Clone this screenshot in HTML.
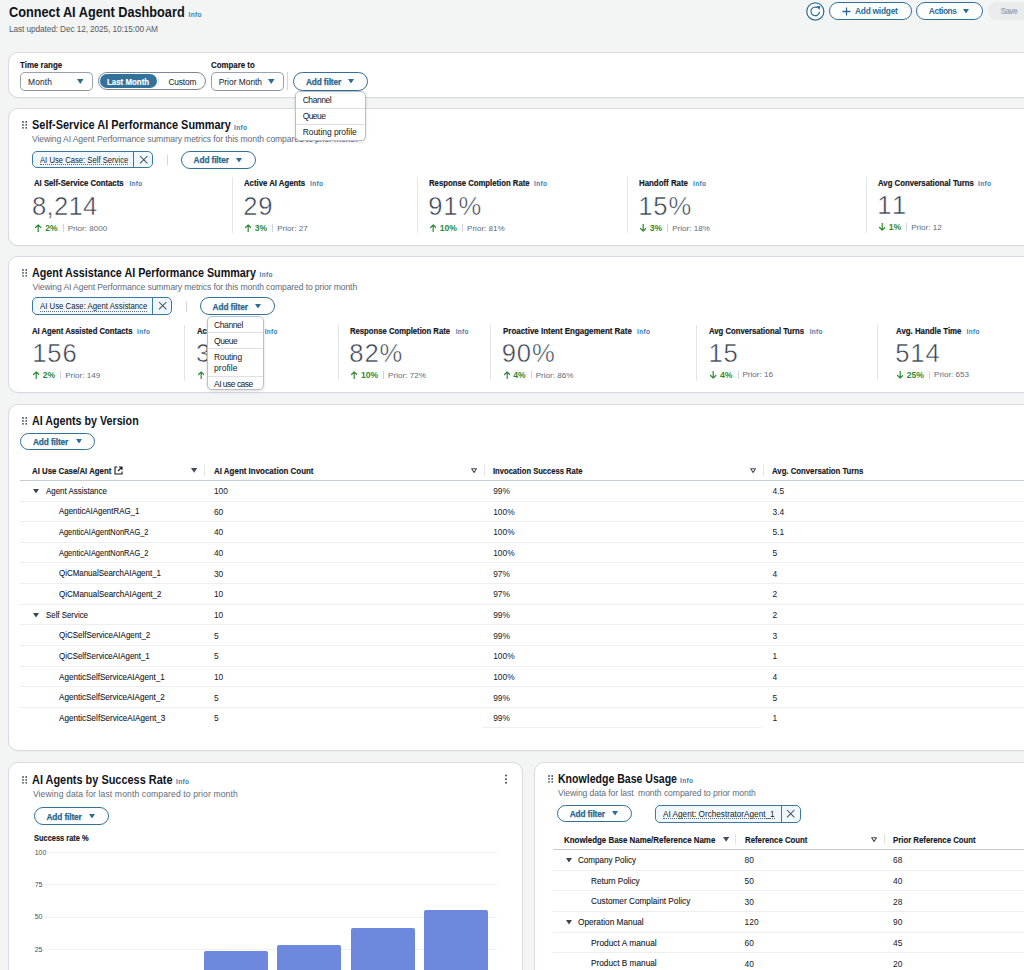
<!DOCTYPE html>
<html><head><meta charset="utf-8">
<style>
*{box-sizing:border-box;margin:0;padding:0}
html,body{width:1024px;height:970px;overflow:hidden}
body{background:#f3f4f4;font-family:"Liberation Sans",sans-serif;color:#16191f;position:relative}
.a{position:absolute;white-space:nowrap;line-height:normal}
.panel{position:absolute;background:#fff;border:1px solid #d7dadf;border-radius:10px;box-shadow:0 0.5px 0.5px rgba(0,7,22,.05)}
</style></head><body>

<div class="a " style="left:8.80px;top:3.95px;font-size:14.2px;transform:scaleX(0.8962);transform-origin:0 0;font-weight:bold;color:#0f141a">Connect AI Agent Dashboard</div>
<div class="a " style="left:188.50px;top:10.92px;font-size:6.5px;letter-spacing:0.330px;font-weight:bold;color:#3a7eb0">Info</div>
<div class="a " style="left:9.00px;top:24.09px;font-size:8.3px;letter-spacing:-0.110px;color:#545b64">Last updated: Dec 12, 2025, 10:15:00 AM</div>
<svg class="a" style="left:805.6px;top:1.8px" width="19" height="19" viewBox="0 0 19 19"><circle cx="9.3" cy="9.45" r="8.55" fill="#fff" stroke="#31709a" stroke-width="1.25"/><path d="M13.5 9.9 A4.3 4.3 0 1 1 11.6 5.8" fill="none" stroke="#2d6c95" stroke-width="1.2"/><path d="M10.4 4.3 L14.3 4.1 L13.6 8.0 Z" fill="#2d6c95"/></svg>
<div class="a" style="left:829.00px;top:2.20px;width:82.50px;height:18.20px;border:1.5px solid #31709a;border-radius:10px;background:#fff"></div>
<svg class="a" style="left:841.8px;top:6.9px" width="9" height="9" viewBox="0 0 9 9"><path d="M4.5 0.5 V8.5 M0.5 4.5 H8.5" stroke="#2d6c95" stroke-width="1.3"/></svg>
<div class="a " style="left:855.00px;top:6.40px;font-size:8.4px;letter-spacing:-0.251px;font-weight:bold;color:#2d6c95">Add widget</div>
<div class="a" style="left:916.00px;top:2.20px;width:66.50px;height:18.20px;border:1.5px solid #31709a;border-radius:10px;background:#fff"></div>
<div class="a " style="left:928.80px;top:6.40px;font-size:8.4px;letter-spacing:-0.433px;font-weight:bold;color:#2d6c95">Actions</div>
<svg class="a" style="left:963.00px;top:8.95px" width="6" height="4.5" viewBox="0 0 6 4.5"><path d="M0 0 L6 0 L3.0 4.5 Z" fill="#2d6c95"/></svg>
<div class="a" style="left:988.00px;top:2.40px;width:52.00px;height:17.80px;border-radius:10px;background:#e9ebed"></div>
<div class="a " style="left:1000.60px;top:6.40px;font-size:8.4px;letter-spacing:-0.872px;font-weight:bold;color:#9ba7b6">Save</div>
<div class="panel" style="left:7.90px;top:52.00px;width:1032.10px;height:45.50px"></div>
<div class="a " style="left:20.30px;top:59.91px;font-size:8.5px;transform:scaleX(0.9338);transform-origin:0 0;font-weight:bold;color:#16191f;-webkit-text-stroke:0.15px #16191f">Time range</div>
<div class="a" style="left:20.20px;top:72.20px;width:72.60px;height:18.40px;border:1px solid #97a3b0;border-bottom-color:#8a96a4;border-radius:5px;background:#fff"></div>
<div class="a " style="left:28.10px;top:77.00px;font-size:8.4px;letter-spacing:0.139px;color:#16191f">Month</div>
<svg class="a" style="left:77.25px;top:79.10px" width="6.5" height="5" viewBox="0 0 6.5 5"><path d="M0 0 L6.5 0 L3.25 5 Z" fill="#2d6c95"/></svg>
<div class="a" style="left:98.00px;top:72.20px;width:108.20px;height:18.10px;border:1px solid #7d8998;border-radius:10px;background:#fff"></div>
<div class="a" style="left:100.00px;top:74.40px;width:56.50px;height:13.80px;border-radius:8px;background:#33729b"></div>
<div class="a " style="left:106.60px;top:76.80px;font-size:8.4px;transform:scaleX(0.9422);transform-origin:0 0;font-weight:bold;color:#fff;-webkit-text-stroke:0.15px #fff">Last Month</div>
<div class="a" style="left:158.10px;top:77.00px;width:1.00px;height:9.00px;background:#e3e6e9"></div>
<div class="a " style="left:168.40px;top:76.80px;font-size:8.4px;letter-spacing:-0.168px;color:#16191f">Custom</div>
<div class="a " style="left:211.00px;top:59.91px;font-size:8.5px;transform:scaleX(0.9253);transform-origin:0 0;font-weight:bold;color:#16191f;-webkit-text-stroke:0.15px #16191f">Compare to</div>
<div class="a" style="left:211.00px;top:72.20px;width:73.20px;height:18.40px;border:1px solid #97a3b0;border-bottom-color:#8a96a4;border-radius:5px;background:#fff"></div>
<div class="a " style="left:218.75px;top:77.00px;font-size:8.4px;letter-spacing:-0.001px;color:#16191f">Prior Month</div>
<svg class="a" style="left:268.35px;top:79.10px" width="6.5" height="5" viewBox="0 0 6.5 5"><path d="M0 0 L6.5 0 L3.25 5 Z" fill="#2d6c95"/></svg>
<div class="a" style="left:287.30px;top:72.30px;width:1.00px;height:18.10px;background:#d3d7dc"></div>
<div class="a" style="left:293.20px;top:72.30px;width:74.70px;height:18.30px;border:1.5px solid #31709a;border-radius:10px;background:#fff"></div>
<div class="a " style="left:305.90px;top:76.94px;font-size:8.3px;letter-spacing:-0.125px;font-weight:bold;color:#2a6890;-webkit-text-stroke:0.25px #2a6890">Add filter</div>
<svg class="a" style="left:348.10px;top:79.20px" width="6" height="4.5" viewBox="0 0 6 4.5"><path d="M0 0 L6 0 L3.0 4.5 Z" fill="#2d6c95"/></svg>
<div class="panel" style="left:7.90px;top:108.00px;width:1032.10px;height:138.00px"></div>
<svg class="a" style="left:21.90px;top:121.00px" width="6" height="8" viewBox="0 0 6 8"><circle cx="1.00" cy="1.00" r="0.9" fill="#414d5c"/><circle cx="1.00" cy="3.90" r="0.9" fill="#414d5c"/><circle cx="1.00" cy="6.80" r="0.9" fill="#414d5c"/><circle cx="4.20" cy="1.00" r="0.9" fill="#414d5c"/><circle cx="4.20" cy="3.90" r="0.9" fill="#414d5c"/><circle cx="4.20" cy="6.80" r="0.9" fill="#414d5c"/></svg>
<div class="a " style="left:32.00px;top:118.37px;font-size:12.3px;transform:scaleX(0.8893);transform-origin:0 0;font-weight:bold;color:#0f141a">Self-Service AI Performance Summary</div>
<div class="a " style="left:234.00px;top:123.52px;font-size:6.5px;letter-spacing:0.330px;font-weight:bold;color:#3a7eb0">Info</div>
<div class="a " style="left:32.00px;top:134.12px;font-size:8.6px;letter-spacing:-0.106px;color:#5f6b7a">Viewing AI Agent Performance summary metrics for this month compared to prior month</div>
<div class="a" style="left:32.00px;top:150.50px;width:121.00px;height:17.90px;border:1.5px solid #3a78a2;border-radius:5px;background:#f1f8fd"></div>
<div class="a" style="left:133.10px;top:150.50px;width:1.00px;height:17.90px;background:#3a78a2"></div>
<div class="a " style="left:39.80px;top:154.67px;font-size:8.6px;transform:scaleX(0.8925);transform-origin:0 0;color:#16191f;">AI Use Case: Self Service</div>
<div class="a" style="left:39.80px;top:163.85px;width:88.30px;height:1.00px;border-bottom:1px dotted #5f6b7a"></div>
<svg class="a" style="left:138.60px;top:154.75px" width="9.4" height="9.4" viewBox="0 0 9.4 9.4"><path d="M1 1 L8.4 8.4 M8.4 1 L1 8.4" stroke="#414d5c" stroke-width="1.05"/></svg>
<div class="a" style="left:166.80px;top:155.00px;width:1.00px;height:10.00px;background:#d3d7dc"></div>
<div class="a" style="left:181.30px;top:151.00px;width:74.70px;height:17.60px;border:1.5px solid #31709a;border-radius:10px;background:#fff"></div>
<div class="a " style="left:193.60px;top:155.29px;font-size:8.3px;letter-spacing:-0.125px;font-weight:bold;color:#2a6890;-webkit-text-stroke:0.25px #2a6890">Add filter</div>
<svg class="a" style="left:236.20px;top:157.55px" width="6" height="4.5" viewBox="0 0 6 4.5"><path d="M0 0 L6 0 L3.0 4.5 Z" fill="#2d6c95"/></svg>
<div class="a" style="left:231.50px;top:177.00px;width:1.00px;height:56.00px;background:#e3e6e9"></div>
<div class="a" style="left:417.00px;top:177.00px;width:1.00px;height:56.00px;background:#e3e6e9"></div>
<div class="a" style="left:626.50px;top:177.00px;width:1.00px;height:56.00px;background:#e3e6e9"></div>
<div class="a" style="left:865.50px;top:177.00px;width:1.00px;height:56.00px;background:#e3e6e9"></div>
<div class="a " style="left:34.40px;top:178.22px;font-size:8.6px;transform:scaleX(0.9013);transform-origin:0 0;font-weight:bold;color:#16191f;-webkit-text-stroke:0.2px #16191f">AI Self-Service Contacts</div>
<div class="a " style="left:129.40px;top:180.12px;font-size:6.5px;letter-spacing:0.330px;font-weight:bold;color:#3a7eb0">Info</div>
<div class="a " style="left:32.00px;top:192.13px;font-size:25.6px;color:#354150;-webkit-text-stroke:0.5px #fff;letter-spacing:0.3px">8,214</div>
<svg class="a" style="left:35.40px;top:224.40px" width="6.4" height="8" viewBox="0 0 6.4 8"><path d="M3.2 0.9 L3.2 8 M0.6 3.5 L3.2 0.9 L5.8 3.5" stroke="#2e8b35" stroke-width="1.2" fill="none" stroke-linecap="round" stroke-linejoin="round"/></svg>
<div class="a " style="left:45.20px;top:223.22px;font-size:8.6px;font-weight:bold;color:#2e8b35">2%</div>
<div class="a" style="left:62.83px;top:224.40px;width:1.00px;height:7.80px;background:#d1d5db"></div>
<div class="a " style="left:67.63px;top:223.67px;font-size:8.1px;color:#5f6b7a">Prior: 8000</div>
<div class="a " style="left:244.00px;top:178.22px;font-size:8.6px;transform:scaleX(0.9040);transform-origin:0 0;font-weight:bold;color:#16191f;-webkit-text-stroke:0.2px #16191f">Active AI Agents</div>
<div class="a " style="left:310.00px;top:180.12px;font-size:6.5px;letter-spacing:0.330px;font-weight:bold;color:#3a7eb0">Info</div>
<div class="a " style="left:243.20px;top:192.13px;font-size:25.6px;color:#354150;-webkit-text-stroke:0.5px #fff;letter-spacing:0.9px">29</div>
<svg class="a" style="left:245.00px;top:224.40px" width="6.4" height="8" viewBox="0 0 6.4 8"><path d="M3.2 0.9 L3.2 8 M0.6 3.5 L3.2 0.9 L5.8 3.5" stroke="#2e8b35" stroke-width="1.2" fill="none" stroke-linecap="round" stroke-linejoin="round"/></svg>
<div class="a " style="left:254.80px;top:223.22px;font-size:8.6px;font-weight:bold;color:#2e8b35">3%</div>
<div class="a" style="left:272.43px;top:224.40px;width:1.00px;height:7.80px;background:#d1d5db"></div>
<div class="a " style="left:277.23px;top:223.67px;font-size:8.1px;color:#5f6b7a">Prior: 27</div>
<div class="a " style="left:429.00px;top:178.22px;font-size:8.6px;transform:scaleX(0.9006);transform-origin:0 0;font-weight:bold;color:#16191f;-webkit-text-stroke:0.2px #16191f">Response Completion Rate</div>
<div class="a " style="left:534.00px;top:180.12px;font-size:6.5px;letter-spacing:0.330px;font-weight:bold;color:#3a7eb0">Info</div>
<div class="a " style="left:428.20px;top:192.13px;font-size:25.6px;color:#354150;-webkit-text-stroke:0.5px #fff;letter-spacing:0.9px">91%</div>
<svg class="a" style="left:430.00px;top:224.40px" width="6.4" height="8" viewBox="0 0 6.4 8"><path d="M3.2 0.9 L3.2 8 M0.6 3.5 L3.2 0.9 L5.8 3.5" stroke="#2e8b35" stroke-width="1.2" fill="none" stroke-linecap="round" stroke-linejoin="round"/></svg>
<div class="a " style="left:439.80px;top:223.22px;font-size:8.6px;font-weight:bold;color:#2e8b35">10%</div>
<div class="a" style="left:462.21px;top:224.40px;width:1.00px;height:7.80px;background:#d1d5db"></div>
<div class="a " style="left:467.01px;top:223.67px;font-size:8.1px;color:#5f6b7a">Prior: 81%</div>
<div class="a " style="left:639.00px;top:178.22px;font-size:8.6px;transform:scaleX(0.9158);transform-origin:0 0;font-weight:bold;color:#16191f;-webkit-text-stroke:0.2px #16191f">Handoff Rate</div>
<div class="a " style="left:693.00px;top:180.12px;font-size:6.5px;letter-spacing:0.330px;font-weight:bold;color:#3a7eb0">Info</div>
<div class="a " style="left:638.20px;top:192.13px;font-size:25.6px;color:#354150;-webkit-text-stroke:0.5px #fff;letter-spacing:0.9px">15%</div>
<svg class="a" style="left:640.00px;top:224.40px" width="6.4" height="8" viewBox="0 0 6.4 8"><path d="M3.2 0 L3.2 7.1 M0.6 4.5 L3.2 7.1 L5.8 4.5" stroke="#2e8b35" stroke-width="1.2" fill="none" stroke-linecap="round" stroke-linejoin="round"/></svg>
<div class="a " style="left:649.80px;top:223.22px;font-size:8.6px;font-weight:bold;color:#2e8b35">3%</div>
<div class="a" style="left:667.43px;top:224.40px;width:1.00px;height:7.80px;background:#d1d5db"></div>
<div class="a " style="left:672.23px;top:223.67px;font-size:8.1px;color:#5f6b7a">Prior: 18%</div>
<div class="a " style="left:878.00px;top:177.72px;font-size:8.6px;transform:scaleX(0.9050);transform-origin:0 0;font-weight:bold;color:#16191f;-webkit-text-stroke:0.2px #16191f">Avg Conversational Turns</div>
<div class="a " style="left:978.00px;top:179.62px;font-size:6.5px;letter-spacing:0.330px;font-weight:bold;color:#3a7eb0">Info</div>
<div class="a " style="left:877.20px;top:191.13px;font-size:25.6px;color:#354150;-webkit-text-stroke:0.5px #fff;letter-spacing:2.5px">11</div>
<svg class="a" style="left:879.00px;top:223.40px" width="6.4" height="8" viewBox="0 0 6.4 8"><path d="M3.2 0 L3.2 7.1 M0.6 4.5 L3.2 7.1 L5.8 4.5" stroke="#2e8b35" stroke-width="1.2" fill="none" stroke-linecap="round" stroke-linejoin="round"/></svg>
<div class="a " style="left:888.80px;top:222.22px;font-size:8.6px;font-weight:bold;color:#2e8b35">1%</div>
<div class="a" style="left:906.43px;top:223.40px;width:1.00px;height:7.80px;background:#d1d5db"></div>
<div class="a " style="left:911.23px;top:222.67px;font-size:8.1px;color:#5f6b7a">Prior: 12</div>
<div class="panel" style="left:7.90px;top:256.40px;width:1032.10px;height:136.40px"></div>
<svg class="a" style="left:21.90px;top:269.00px" width="6" height="8" viewBox="0 0 6 8"><circle cx="1.00" cy="1.00" r="0.9" fill="#414d5c"/><circle cx="1.00" cy="3.90" r="0.9" fill="#414d5c"/><circle cx="1.00" cy="6.80" r="0.9" fill="#414d5c"/><circle cx="4.20" cy="1.00" r="0.9" fill="#414d5c"/><circle cx="4.20" cy="3.90" r="0.9" fill="#414d5c"/><circle cx="4.20" cy="6.80" r="0.9" fill="#414d5c"/></svg>
<div class="a " style="left:32.20px;top:266.17px;font-size:12.3px;transform:scaleX(0.8746);transform-origin:0 0;font-weight:bold;color:#0f141a">Agent Assistance AI Performance Summary</div>
<div class="a " style="left:259.60px;top:271.02px;font-size:6.5px;letter-spacing:0.330px;font-weight:bold;color:#3a7eb0">Info</div>
<div class="a " style="left:32.50px;top:281.92px;font-size:8.6px;letter-spacing:-0.116px;color:#5f6b7a">Viewing AI Agent Performance summary metrics for this month compared to prior month</div>
<div class="a" style="left:31.70px;top:297.20px;width:140.20px;height:17.80px;border:1.5px solid #3a78a2;border-radius:5px;background:#f1f8fd"></div>
<div class="a" style="left:152.00px;top:297.20px;width:1.00px;height:17.80px;background:#3a78a2"></div>
<div class="a " style="left:39.50px;top:301.32px;font-size:8.6px;transform:scaleX(0.9060);transform-origin:0 0;color:#16191f;">AI Use Case: Agent Assistance</div>
<div class="a" style="left:39.50px;top:310.50px;width:107.40px;height:1.00px;border-bottom:1px dotted #5f6b7a"></div>
<svg class="a" style="left:157.50px;top:301.40px" width="9.4" height="9.4" viewBox="0 0 9.4 9.4"><path d="M1 1 L8.4 8.4 M8.4 1 L1 8.4" stroke="#414d5c" stroke-width="1.05"/></svg>
<div class="a" style="left:185.90px;top:300.50px;width:1.00px;height:11.20px;background:#d3d7dc"></div>
<div class="a" style="left:200.20px;top:297.30px;width:74.40px;height:17.50px;border:1.5px solid #31709a;border-radius:10px;background:#fff"></div>
<div class="a " style="left:212.60px;top:301.54px;font-size:8.3px;letter-spacing:-0.125px;font-weight:bold;color:#2a6890;-webkit-text-stroke:0.25px #2a6890">Add filter</div>
<svg class="a" style="left:255.00px;top:303.80px" width="6" height="4.5" viewBox="0 0 6 4.5"><path d="M0 0 L6 0 L3.0 4.5 Z" fill="#2d6c95"/></svg>
<div class="a" style="left:184.00px;top:324.60px;width:1.00px;height:56.20px;background:#e3e6e9"></div>
<div class="a" style="left:337.50px;top:324.60px;width:1.00px;height:56.20px;background:#e3e6e9"></div>
<div class="a" style="left:490.10px;top:324.60px;width:1.00px;height:56.20px;background:#e3e6e9"></div>
<div class="a" style="left:696.30px;top:324.60px;width:1.00px;height:56.20px;background:#e3e6e9"></div>
<div class="a" style="left:877.00px;top:324.60px;width:1.00px;height:56.20px;background:#e3e6e9"></div>
<div class="a " style="left:32.00px;top:325.82px;font-size:8.6px;transform:scaleX(0.8963);transform-origin:0 0;font-weight:bold;color:#16191f;-webkit-text-stroke:0.2px #16191f">AI Agent Assisted Contacts</div>
<div class="a " style="left:137.00px;top:327.72px;font-size:6.5px;letter-spacing:0.330px;font-weight:bold;color:#3a7eb0">Info</div>
<div class="a " style="left:32.20px;top:339.13px;font-size:25.6px;color:#354150;-webkit-text-stroke:0.5px #fff;letter-spacing:0.9px">156</div>
<svg class="a" style="left:33.00px;top:371.40px" width="6.4" height="8" viewBox="0 0 6.4 8"><path d="M3.2 0.9 L3.2 8 M0.6 3.5 L3.2 0.9 L5.8 3.5" stroke="#2e8b35" stroke-width="1.2" fill="none" stroke-linecap="round" stroke-linejoin="round"/></svg>
<div class="a " style="left:42.80px;top:370.22px;font-size:8.6px;font-weight:bold;color:#2e8b35">2%</div>
<div class="a" style="left:60.43px;top:371.40px;width:1.00px;height:7.80px;background:#d1d5db"></div>
<div class="a " style="left:65.23px;top:370.67px;font-size:8.1px;color:#5f6b7a">Prior: 149</div>
<div class="a " style="left:196.70px;top:325.82px;font-size:8.6px;transform:scaleX(0.9040);transform-origin:0 0;font-weight:bold;color:#16191f;-webkit-text-stroke:0.2px #16191f">Active AI Agents</div>
<div class="a " style="left:264.70px;top:327.72px;font-size:6.5px;letter-spacing:0.330px;font-weight:bold;color:#3a7eb0">Info</div>
<div class="a " style="left:195.90px;top:339.13px;font-size:25.6px;color:#354150;-webkit-text-stroke:0.5px #fff;letter-spacing:0.9px">34</div>
<svg class="a" style="left:197.70px;top:371.40px" width="6.4" height="8" viewBox="0 0 6.4 8"><path d="M3.2 0.9 L3.2 8 M0.6 3.5 L3.2 0.9 L5.8 3.5" stroke="#2e8b35" stroke-width="1.2" fill="none" stroke-linecap="round" stroke-linejoin="round"/></svg>
<div class="a " style="left:207.50px;top:370.22px;font-size:8.6px;font-weight:bold;color:#2e8b35">3%</div>
<div class="a" style="left:225.13px;top:371.40px;width:1.00px;height:7.80px;background:#d1d5db"></div>
<div class="a " style="left:229.93px;top:370.67px;font-size:8.1px;color:#5f6b7a">Prior: 30</div>
<div class="a " style="left:350.10px;top:325.82px;font-size:8.6px;transform:scaleX(0.8953);transform-origin:0 0;font-weight:bold;color:#16191f;-webkit-text-stroke:0.2px #16191f">Response Completion Rate</div>
<div class="a " style="left:455.70px;top:327.72px;font-size:6.5px;letter-spacing:0.330px;font-weight:bold;color:#3a7eb0">Info</div>
<div class="a " style="left:349.30px;top:339.13px;font-size:25.6px;color:#354150;-webkit-text-stroke:0.5px #fff;letter-spacing:0.9px">82%</div>
<svg class="a" style="left:351.10px;top:371.40px" width="6.4" height="8" viewBox="0 0 6.4 8"><path d="M3.2 0.9 L3.2 8 M0.6 3.5 L3.2 0.9 L5.8 3.5" stroke="#2e8b35" stroke-width="1.2" fill="none" stroke-linecap="round" stroke-linejoin="round"/></svg>
<div class="a " style="left:360.90px;top:370.22px;font-size:8.6px;font-weight:bold;color:#2e8b35">10%</div>
<div class="a" style="left:383.31px;top:371.40px;width:1.00px;height:7.80px;background:#d1d5db"></div>
<div class="a " style="left:388.11px;top:370.67px;font-size:8.1px;color:#5f6b7a">Prior: 72%</div>
<div class="a " style="left:502.50px;top:325.82px;font-size:8.6px;transform:scaleX(0.9238);transform-origin:0 0;font-weight:bold;color:#16191f;-webkit-text-stroke:0.2px #16191f">Proactive Intent Engagement Rate</div>
<div class="a " style="left:637.00px;top:327.72px;font-size:6.5px;letter-spacing:0.330px;font-weight:bold;color:#3a7eb0">Info</div>
<div class="a " style="left:501.70px;top:339.13px;font-size:25.6px;color:#354150;-webkit-text-stroke:0.5px #fff;letter-spacing:0.9px">90%</div>
<svg class="a" style="left:503.50px;top:371.40px" width="6.4" height="8" viewBox="0 0 6.4 8"><path d="M3.2 0.9 L3.2 8 M0.6 3.5 L3.2 0.9 L5.8 3.5" stroke="#2e8b35" stroke-width="1.2" fill="none" stroke-linecap="round" stroke-linejoin="round"/></svg>
<div class="a " style="left:513.30px;top:370.22px;font-size:8.6px;font-weight:bold;color:#2e8b35">4%</div>
<div class="a" style="left:530.93px;top:371.40px;width:1.00px;height:7.80px;background:#d1d5db"></div>
<div class="a " style="left:535.73px;top:370.67px;font-size:8.1px;color:#5f6b7a">Prior: 86%</div>
<div class="a " style="left:709.20px;top:325.82px;font-size:8.6px;transform:scaleX(0.8965);transform-origin:0 0;font-weight:bold;color:#16191f;-webkit-text-stroke:0.2px #16191f">Avg Conversational Turns</div>
<div class="a " style="left:809.70px;top:327.72px;font-size:6.5px;letter-spacing:0.330px;font-weight:bold;color:#3a7eb0">Info</div>
<div class="a " style="left:708.40px;top:338.63px;font-size:25.6px;color:#354150;-webkit-text-stroke:0.5px #fff;letter-spacing:0.9px">15</div>
<svg class="a" style="left:710.20px;top:371.20px" width="6.4" height="8" viewBox="0 0 6.4 8"><path d="M3.2 0 L3.2 7.1 M0.6 4.5 L3.2 7.1 L5.8 4.5" stroke="#2e8b35" stroke-width="1.2" fill="none" stroke-linecap="round" stroke-linejoin="round"/></svg>
<div class="a " style="left:720.00px;top:370.02px;font-size:8.6px;font-weight:bold;color:#2e8b35">4%</div>
<div class="a" style="left:737.63px;top:371.20px;width:1.00px;height:7.80px;background:#d1d5db"></div>
<div class="a " style="left:742.43px;top:370.47px;font-size:8.1px;color:#5f6b7a">Prior: 16</div>
<div class="a " style="left:896.00px;top:325.82px;font-size:8.6px;transform:scaleX(0.9138);transform-origin:0 0;font-weight:bold;color:#16191f;-webkit-text-stroke:0.2px #16191f">Avg. Handle Time</div>
<div class="a " style="left:966.50px;top:327.72px;font-size:6.5px;letter-spacing:0.330px;font-weight:bold;color:#3a7eb0">Info</div>
<div class="a " style="left:895.20px;top:338.63px;font-size:25.6px;color:#354150;-webkit-text-stroke:0.5px #fff;letter-spacing:0.9px">514</div>
<svg class="a" style="left:897.00px;top:371.20px" width="6.4" height="8" viewBox="0 0 6.4 8"><path d="M3.2 0 L3.2 7.1 M0.6 4.5 L3.2 7.1 L5.8 4.5" stroke="#2e8b35" stroke-width="1.2" fill="none" stroke-linecap="round" stroke-linejoin="round"/></svg>
<div class="a " style="left:906.80px;top:370.02px;font-size:8.6px;font-weight:bold;color:#2e8b35">25%</div>
<div class="a" style="left:929.21px;top:371.20px;width:1.00px;height:7.80px;background:#d1d5db"></div>
<div class="a " style="left:934.01px;top:370.47px;font-size:8.1px;color:#5f6b7a">Prior: 653</div>
<div class="panel" style="left:7.90px;top:404.10px;width:1032.10px;height:347.00px"></div>
<svg class="a" style="left:22.30px;top:416.50px" width="6" height="8" viewBox="0 0 6 8"><circle cx="1.00" cy="1.00" r="0.9" fill="#414d5c"/><circle cx="1.00" cy="3.90" r="0.9" fill="#414d5c"/><circle cx="1.00" cy="6.80" r="0.9" fill="#414d5c"/><circle cx="4.20" cy="1.00" r="0.9" fill="#414d5c"/><circle cx="4.20" cy="3.90" r="0.9" fill="#414d5c"/><circle cx="4.20" cy="6.80" r="0.9" fill="#414d5c"/></svg>
<div class="a " style="left:31.70px;top:414.27px;font-size:12.3px;transform:scaleX(0.8705);transform-origin:0 0;font-weight:bold;color:#0f141a">AI Agents by Version</div>
<div class="a" style="left:20.30px;top:432.50px;width:74.90px;height:17.80px;border:1.5px solid #31709a;border-radius:10px;background:#fff"></div>
<div class="a " style="left:33.00px;top:436.89px;font-size:8.3px;letter-spacing:-0.125px;font-weight:bold;color:#2a6890;-webkit-text-stroke:0.25px #2a6890">Add filter</div>
<svg class="a" style="left:75.50px;top:439.15px" width="6" height="4.5" viewBox="0 0 6 4.5"><path d="M0 0 L6 0 L3.0 4.5 Z" fill="#2d6c95"/></svg>
<div class="a " style="left:31.70px;top:465.91px;font-size:8.5px;transform:scaleX(0.9208);transform-origin:0 0;font-weight:bold;color:#16191f;-webkit-text-stroke:0.15px #16191f">AI Use Case/AI Agent</div>
<svg class="a" style="left:114.3px;top:465.8px" width="9" height="9" viewBox="0 0 9 9"><path d="M3.5 1 H1 V8 H8 V5.5 M5 1 H8 V4 M8 1 L4 5" fill="none" stroke="#16191f" stroke-width="1.1"/></svg>
<svg class="a" style="left:191.20px;top:467.90px" width="6.2" height="4.8" viewBox="0 0 6.2 4.8"><path d="M0 0 L6.2 0 L3.1 4.8 Z" fill="#414d5c"/></svg>
<div class="a" style="left:203.90px;top:465.00px;width:1.00px;height:11.00px;background:#e3e6e9"></div>
<div class="a " style="left:213.50px;top:465.91px;font-size:8.5px;transform:scaleX(0.9352);transform-origin:0 0;font-weight:bold;color:#16191f;-webkit-text-stroke:0.15px #16191f">AI Agent Invocation Count</div>
<svg class="a" style="left:470.90px;top:467.80px" width="6.2" height="5" viewBox="0 0 6.2 5"><path d="M0.7 0.7 L5.5 0.7 L3.1 4.5 Z" fill="none" stroke="#414d5c" stroke-width="1.1" stroke-linejoin="round"/></svg>
<div class="a" style="left:484.10px;top:465.00px;width:1.00px;height:11.00px;background:#e3e6e9"></div>
<div class="a " style="left:493.20px;top:465.91px;font-size:8.5px;transform:scaleX(0.8947);transform-origin:0 0;font-weight:bold;color:#16191f;-webkit-text-stroke:0.15px #16191f">Invocation Success Rate</div>
<svg class="a" style="left:749.90px;top:467.80px" width="6.2" height="5" viewBox="0 0 6.2 5"><path d="M0.7 0.7 L5.5 0.7 L3.1 4.5 Z" fill="none" stroke="#414d5c" stroke-width="1.1" stroke-linejoin="round"/></svg>
<div class="a" style="left:763.00px;top:465.00px;width:1.00px;height:11.00px;background:#e3e6e9"></div>
<div class="a " style="left:772.30px;top:465.91px;font-size:8.5px;transform:scaleX(0.9129);transform-origin:0 0;font-weight:bold;color:#16191f;-webkit-text-stroke:0.15px #16191f">Avg. Conversation Turns</div>
<div class="a" style="left:20.30px;top:479.80px;width:1019.70px;height:1.10px;background:#c6ccd2"></div>
<svg class="a" style="left:33.20px;top:489.26px" width="6" height="4.5" viewBox="0 0 6 4.5"><path d="M0 0 L6 0 L3.0 4.5 Z" fill="#3b4654"/></svg>
<div class="a " style="left:45.60px;top:485.85px;font-size:8.8px;transform:scaleX(0.9021);transform-origin:0 0;color:#16191f;-webkit-text-stroke:0.1px #16191f">Agent Assistance</div>
<div class="a " style="left:213.90px;top:486.21px;font-size:8.4px;color:#16191f">100</div>
<div class="a " style="left:493.20px;top:486.21px;font-size:8.4px;color:#16191f">99%</div>
<div class="a " style="left:772.50px;top:486.21px;font-size:8.4px;color:#16191f">4.5</div>
<div class="a" style="left:20.30px;top:500.53px;width:1019.70px;height:1.00px;background:#eceef0"></div>
<div class="a " style="left:59.20px;top:506.48px;font-size:8.8px;transform:scaleX(0.8981);transform-origin:0 0;color:#16191f;-webkit-text-stroke:0.1px #16191f">AgenticAIAgentRAG_1</div>
<div class="a " style="left:213.90px;top:506.84px;font-size:8.4px;color:#16191f">60</div>
<div class="a " style="left:493.20px;top:506.84px;font-size:8.4px;color:#16191f">100%</div>
<div class="a " style="left:772.50px;top:506.84px;font-size:8.4px;color:#16191f">3.4</div>
<div class="a" style="left:20.30px;top:521.16px;width:1019.70px;height:1.00px;background:#eceef0"></div>
<div class="a " style="left:59.20px;top:527.11px;font-size:8.8px;transform:scaleX(0.8471);transform-origin:0 0;color:#16191f;-webkit-text-stroke:0.1px #16191f">AgenticAIAgentNonRAG_2</div>
<div class="a " style="left:213.90px;top:527.47px;font-size:8.4px;color:#16191f">40</div>
<div class="a " style="left:493.20px;top:527.47px;font-size:8.4px;color:#16191f">100%</div>
<div class="a " style="left:772.50px;top:527.47px;font-size:8.4px;color:#16191f">5.1</div>
<div class="a" style="left:20.30px;top:541.79px;width:1019.70px;height:1.00px;background:#eceef0"></div>
<div class="a " style="left:59.20px;top:547.74px;font-size:8.8px;transform:scaleX(0.8471);transform-origin:0 0;color:#16191f;-webkit-text-stroke:0.1px #16191f">AgenticAIAgentNonRAG_2</div>
<div class="a " style="left:213.90px;top:548.10px;font-size:8.4px;color:#16191f">40</div>
<div class="a " style="left:493.20px;top:548.10px;font-size:8.4px;color:#16191f">100%</div>
<div class="a " style="left:772.50px;top:548.10px;font-size:8.4px;color:#16191f">5</div>
<div class="a" style="left:20.30px;top:562.42px;width:1019.70px;height:1.00px;background:#eceef0"></div>
<div class="a " style="left:59.20px;top:568.37px;font-size:8.8px;transform:scaleX(0.9027);transform-origin:0 0;color:#16191f;-webkit-text-stroke:0.1px #16191f">QiCManualSearchAIAgent_1</div>
<div class="a " style="left:213.90px;top:568.73px;font-size:8.4px;color:#16191f">30</div>
<div class="a " style="left:493.20px;top:568.73px;font-size:8.4px;color:#16191f">97%</div>
<div class="a " style="left:772.50px;top:568.73px;font-size:8.4px;color:#16191f">4</div>
<div class="a" style="left:20.30px;top:583.05px;width:1019.70px;height:1.00px;background:#eceef0"></div>
<div class="a " style="left:59.20px;top:589.00px;font-size:8.8px;transform:scaleX(0.9071);transform-origin:0 0;color:#16191f;-webkit-text-stroke:0.1px #16191f">QiCManualSearchAIAgent_2</div>
<div class="a " style="left:213.90px;top:589.36px;font-size:8.4px;color:#16191f">10</div>
<div class="a " style="left:493.20px;top:589.36px;font-size:8.4px;color:#16191f">97%</div>
<div class="a " style="left:772.50px;top:589.36px;font-size:8.4px;color:#16191f">2</div>
<div class="a" style="left:20.30px;top:603.68px;width:1019.70px;height:1.00px;background:#eceef0"></div>
<svg class="a" style="left:33.20px;top:613.04px" width="6" height="4.5" viewBox="0 0 6 4.5"><path d="M0 0 L6 0 L3.0 4.5 Z" fill="#3b4654"/></svg>
<div class="a " style="left:45.60px;top:609.63px;font-size:8.8px;transform:scaleX(0.8946);transform-origin:0 0;color:#16191f;-webkit-text-stroke:0.1px #16191f">Self Service</div>
<div class="a " style="left:213.90px;top:609.99px;font-size:8.4px;color:#16191f">10</div>
<div class="a " style="left:493.20px;top:609.99px;font-size:8.4px;color:#16191f">99%</div>
<div class="a " style="left:772.50px;top:609.99px;font-size:8.4px;color:#16191f">2</div>
<div class="a" style="left:20.30px;top:624.31px;width:1019.70px;height:1.00px;background:#eceef0"></div>
<div class="a " style="left:59.20px;top:630.26px;font-size:8.8px;transform:scaleX(0.9061);transform-origin:0 0;color:#16191f;-webkit-text-stroke:0.1px #16191f">QiCSelfServiceAIAgent_2</div>
<div class="a " style="left:213.90px;top:630.62px;font-size:8.4px;color:#16191f">5</div>
<div class="a " style="left:493.20px;top:630.62px;font-size:8.4px;color:#16191f">99%</div>
<div class="a " style="left:772.50px;top:630.62px;font-size:8.4px;color:#16191f">3</div>
<div class="a" style="left:20.30px;top:644.94px;width:1019.70px;height:1.00px;background:#eceef0"></div>
<div class="a " style="left:59.20px;top:650.89px;font-size:8.8px;transform:scaleX(0.9012);transform-origin:0 0;color:#16191f;-webkit-text-stroke:0.1px #16191f">QiCSelfServiceAIAgent_1</div>
<div class="a " style="left:213.90px;top:651.25px;font-size:8.4px;color:#16191f">5</div>
<div class="a " style="left:493.20px;top:651.25px;font-size:8.4px;color:#16191f">100%</div>
<div class="a " style="left:772.50px;top:651.25px;font-size:8.4px;color:#16191f">1</div>
<div class="a" style="left:20.30px;top:665.57px;width:1019.70px;height:1.00px;background:#eceef0"></div>
<div class="a " style="left:59.20px;top:671.52px;font-size:8.8px;transform:scaleX(0.9204);transform-origin:0 0;color:#16191f;-webkit-text-stroke:0.1px #16191f">AgenticSelfServiceAIAgent_1</div>
<div class="a " style="left:213.90px;top:671.88px;font-size:8.4px;color:#16191f">10</div>
<div class="a " style="left:493.20px;top:671.88px;font-size:8.4px;color:#16191f">100%</div>
<div class="a " style="left:772.50px;top:671.88px;font-size:8.4px;color:#16191f">4</div>
<div class="a" style="left:20.30px;top:686.20px;width:1019.70px;height:1.00px;background:#eceef0"></div>
<div class="a " style="left:59.20px;top:692.15px;font-size:8.8px;transform:scaleX(0.9204);transform-origin:0 0;color:#16191f;-webkit-text-stroke:0.1px #16191f">AgenticSelfServiceAIAgent_2</div>
<div class="a " style="left:213.90px;top:692.51px;font-size:8.4px;color:#16191f">5</div>
<div class="a " style="left:493.20px;top:692.51px;font-size:8.4px;color:#16191f">99%</div>
<div class="a " style="left:772.50px;top:692.51px;font-size:8.4px;color:#16191f">5</div>
<div class="a" style="left:20.30px;top:706.83px;width:1019.70px;height:1.00px;background:#eceef0"></div>
<div class="a " style="left:59.20px;top:712.78px;font-size:8.8px;transform:scaleX(0.9247);transform-origin:0 0;color:#16191f;-webkit-text-stroke:0.1px #16191f">AgenticSelfServiceAIAgent_3</div>
<div class="a " style="left:213.90px;top:713.14px;font-size:8.4px;color:#16191f">5</div>
<div class="a " style="left:493.20px;top:713.14px;font-size:8.4px;color:#16191f">99%</div>
<div class="a " style="left:772.50px;top:713.14px;font-size:8.4px;color:#16191f">1</div>
<div class="a" style="left:482.00px;top:727.46px;width:280.00px;height:1.00px;background:#eceef0"></div>
<div class="panel" style="left:7.90px;top:762.00px;width:515.40px;height:238.00px"></div>
<svg class="a" style="left:22.30px;top:775.50px" width="6" height="8" viewBox="0 0 6 8"><circle cx="1.00" cy="1.00" r="0.9" fill="#414d5c"/><circle cx="1.00" cy="3.90" r="0.9" fill="#414d5c"/><circle cx="1.00" cy="6.80" r="0.9" fill="#414d5c"/><circle cx="4.20" cy="1.00" r="0.9" fill="#414d5c"/><circle cx="4.20" cy="3.90" r="0.9" fill="#414d5c"/><circle cx="4.20" cy="6.80" r="0.9" fill="#414d5c"/></svg>
<div class="a " style="left:32.20px;top:773.07px;font-size:12.3px;transform:scaleX(0.8885);transform-origin:0 0;font-weight:bold;color:#0f141a">AI Agents by Success Rate</div>
<div class="a " style="left:176.00px;top:777.82px;font-size:6.5px;letter-spacing:0.330px;font-weight:bold;color:#3a7eb0">Info</div>
<svg class="a" style="left:503px;top:774px" width="6" height="11" viewBox="0 0 6 11"><circle cx="3" cy="1.6" r="1" fill="#414d5c"/><circle cx="3" cy="5.2" r="1" fill="#414d5c"/><circle cx="3" cy="8.8" r="1" fill="#414d5c"/></svg>
<div class="a " style="left:32.90px;top:789.02px;font-size:8.6px;letter-spacing:0.107px;color:#5f6b7a">Viewing data for last month compared to prior month</div>
<div class="a" style="left:33.80px;top:807.30px;width:74.90px;height:17.70px;border:1.5px solid #31709a;border-radius:10px;background:#fff"></div>
<div class="a " style="left:46.50px;top:811.64px;font-size:8.3px;letter-spacing:-0.125px;font-weight:bold;color:#2a6890;-webkit-text-stroke:0.25px #2a6890">Add filter</div>
<svg class="a" style="left:88.70px;top:813.90px" width="6" height="4.5" viewBox="0 0 6 4.5"><path d="M0 0 L6 0 L3.0 4.5 Z" fill="#2d6c95"/></svg>
<div class="a " style="left:34.30px;top:833.11px;font-size:8.5px;transform:scaleX(0.8754);transform-origin:0 0;font-weight:bold;color:#16191f;-webkit-text-stroke:0.15px #16191f">Success rate %</div>
<div class="a " style="left:34.70px;top:848.57px;font-size:7px;color:#414d5c">100</div>
<div class="a" style="left:48.40px;top:851.70px;width:448.60px;height:1.00px;background:#f0f1f3"></div>
<div class="a " style="left:34.70px;top:881.16px;font-size:7px;color:#414d5c">75</div>
<div class="a" style="left:45.40px;top:884.30px;width:451.60px;height:1.00px;background:#f0f1f3"></div>
<div class="a " style="left:34.70px;top:913.37px;font-size:7px;color:#414d5c">50</div>
<div class="a" style="left:45.40px;top:916.50px;width:451.60px;height:1.00px;background:#f0f1f3"></div>
<div class="a " style="left:34.70px;top:945.66px;font-size:7px;color:#414d5c">25</div>
<div class="a" style="left:45.40px;top:948.80px;width:451.60px;height:1.00px;background:#f0f1f3"></div>
<div class="a" style="left:204.00px;top:950.80px;width:64.00px;height:49.20px;background:#6e88de;border-radius:2px 2px 0 0"></div>
<div class="a" style="left:277.40px;top:945.00px;width:64.00px;height:55.00px;background:#6e88de;border-radius:2px 2px 0 0"></div>
<div class="a" style="left:350.70px;top:927.80px;width:64.10px;height:72.20px;background:#6e88de;border-radius:2px 2px 0 0"></div>
<div class="a" style="left:424.00px;top:909.60px;width:64.00px;height:90.40px;background:#6e88de;border-radius:2px 2px 0 0"></div>
<div class="panel" style="left:533.60px;top:762.00px;width:506.40px;height:238.00px"></div>
<svg class="a" style="left:547.50px;top:774.50px" width="6" height="8" viewBox="0 0 6 8"><circle cx="1.00" cy="1.00" r="0.9" fill="#414d5c"/><circle cx="1.00" cy="3.90" r="0.9" fill="#414d5c"/><circle cx="1.00" cy="6.80" r="0.9" fill="#414d5c"/><circle cx="4.20" cy="1.00" r="0.9" fill="#414d5c"/><circle cx="4.20" cy="3.90" r="0.9" fill="#414d5c"/><circle cx="4.20" cy="6.80" r="0.9" fill="#414d5c"/></svg>
<div class="a " style="left:557.90px;top:771.97px;font-size:12.3px;transform:scaleX(0.8577);transform-origin:0 0;font-weight:bold;color:#0f141a">Knowledge Base Usage</div>
<div class="a " style="left:680.00px;top:776.92px;font-size:6.5px;letter-spacing:0.330px;font-weight:bold;color:#3a7eb0">Info</div>
<div class="a " style="left:557.90px;top:787.62px;font-size:8.6px;letter-spacing:-0.079px;color:#5f6b7a">Viewing data for last&nbsp; month compared to prior month</div>
<div class="a" style="left:557.00px;top:804.70px;width:75.00px;height:17.80px;border:1.5px solid #31709a;border-radius:10px;background:#fff"></div>
<div class="a " style="left:569.70px;top:809.09px;font-size:8.3px;letter-spacing:-0.125px;font-weight:bold;color:#2a6890;-webkit-text-stroke:0.25px #2a6890">Add filter</div>
<svg class="a" style="left:611.70px;top:811.35px" width="6" height="4.5" viewBox="0 0 6 4.5"><path d="M0 0 L6 0 L3.0 4.5 Z" fill="#2d6c95"/></svg>
<div class="a" style="left:655.00px;top:805.00px;width:146.00px;height:17.50px;border:1.5px solid #3a78a2;border-radius:5px;background:#f1f8fd"></div>
<div class="a" style="left:780.50px;top:805.00px;width:1.00px;height:17.50px;background:#3a78a2"></div>
<div class="a " style="left:663.00px;top:808.97px;font-size:8.6px;transform:scaleX(0.9537);transform-origin:0 0;color:#16191f;">AI Agent: OrchestratorAgent_1</div>
<div class="a" style="left:663.00px;top:818.15px;width:111.70px;height:1.00px;border-bottom:1px dotted #5f6b7a"></div>
<svg class="a" style="left:786.30px;top:809.05px" width="9.4" height="9.4" viewBox="0 0 9.4 9.4"><path d="M1 1 L8.4 8.4 M8.4 1 L1 8.4" stroke="#414d5c" stroke-width="1.05"/></svg>
<div class="a " style="left:564.20px;top:835.11px;font-size:8.5px;transform:scaleX(0.9311);transform-origin:0 0;font-weight:bold;color:#16191f;-webkit-text-stroke:0.15px #16191f">Knowledge Base Name/Reference Name</div>
<svg class="a" style="left:723.00px;top:837.00px" width="6.2" height="4.8" viewBox="0 0 6.2 4.8"><path d="M0 0 L6.2 0 L3.1 4.8 Z" fill="#414d5c"/></svg>
<div class="a" style="left:735.10px;top:834.00px;width:1.00px;height:11.00px;background:#e3e6e9"></div>
<div class="a " style="left:744.60px;top:835.11px;font-size:8.5px;transform:scaleX(0.9175);transform-origin:0 0;font-weight:bold;color:#16191f;-webkit-text-stroke:0.15px #16191f">Reference Count</div>
<svg class="a" style="left:870.50px;top:836.90px" width="6.2" height="5" viewBox="0 0 6.2 5"><path d="M0.7 0.7 L5.5 0.7 L3.1 4.5 Z" fill="none" stroke="#414d5c" stroke-width="1.1" stroke-linejoin="round"/></svg>
<div class="a" style="left:883.50px;top:834.00px;width:1.00px;height:11.00px;background:#e3e6e9"></div>
<div class="a " style="left:893.00px;top:835.11px;font-size:8.5px;transform:scaleX(0.9168);transform-origin:0 0;font-weight:bold;color:#16191f;-webkit-text-stroke:0.15px #16191f">Prior Reference Count</div>
<div class="a" style="left:552.50px;top:848.90px;width:487.50px;height:1.10px;background:#c6ccd2"></div>
<svg class="a" style="left:565.70px;top:857.94px" width="6" height="4.6" viewBox="0 0 6 4.6"><path d="M0 0 L6 0 L3.0 4.6 Z" fill="#3b4654"/></svg>
<div class="a " style="left:577.80px;top:854.87px;font-size:8.8px;transform:scaleX(0.9138);transform-origin:0 0;color:#16191f;-webkit-text-stroke:0.1px #16191f">Company Policy</div>
<div class="a " style="left:744.60px;top:855.23px;font-size:8.4px;color:#16191f">80</div>
<div class="a " style="left:893.00px;top:855.23px;font-size:8.4px;color:#16191f">68</div>
<div class="a" style="left:552.50px;top:869.57px;width:487.50px;height:1.00px;background:#eceef0"></div>
<div class="a " style="left:591.00px;top:875.54px;font-size:8.8px;transform:scaleX(0.9306);transform-origin:0 0;color:#16191f;-webkit-text-stroke:0.1px #16191f">Return Policy</div>
<div class="a " style="left:744.60px;top:875.90px;font-size:8.4px;color:#16191f">50</div>
<div class="a " style="left:893.00px;top:875.90px;font-size:8.4px;color:#16191f">40</div>
<div class="a" style="left:552.50px;top:890.24px;width:487.50px;height:1.00px;background:#eceef0"></div>
<div class="a " style="left:591.00px;top:896.21px;font-size:8.8px;transform:scaleX(0.9357);transform-origin:0 0;color:#16191f;-webkit-text-stroke:0.1px #16191f">Customer Complaint Policy</div>
<div class="a " style="left:744.60px;top:896.57px;font-size:8.4px;color:#16191f">30</div>
<div class="a " style="left:893.00px;top:896.57px;font-size:8.4px;color:#16191f">28</div>
<div class="a" style="left:552.50px;top:910.91px;width:487.50px;height:1.00px;background:#eceef0"></div>
<svg class="a" style="left:565.70px;top:919.95px" width="6" height="4.6" viewBox="0 0 6 4.6"><path d="M0 0 L6 0 L3.0 4.6 Z" fill="#3b4654"/></svg>
<div class="a " style="left:577.80px;top:916.88px;font-size:8.8px;transform:scaleX(0.9393);transform-origin:0 0;color:#16191f;-webkit-text-stroke:0.1px #16191f">Operation Manual</div>
<div class="a " style="left:744.60px;top:917.24px;font-size:8.4px;color:#16191f">120</div>
<div class="a " style="left:893.00px;top:917.24px;font-size:8.4px;color:#16191f">90</div>
<div class="a" style="left:552.50px;top:931.58px;width:487.50px;height:1.00px;background:#eceef0"></div>
<div class="a " style="left:591.00px;top:937.55px;font-size:8.8px;transform:scaleX(0.9525);transform-origin:0 0;color:#16191f;-webkit-text-stroke:0.1px #16191f">Product A manual</div>
<div class="a " style="left:744.60px;top:937.91px;font-size:8.4px;color:#16191f">60</div>
<div class="a " style="left:893.00px;top:937.91px;font-size:8.4px;color:#16191f">45</div>
<div class="a" style="left:552.50px;top:952.25px;width:487.50px;height:1.00px;background:#eceef0"></div>
<div class="a " style="left:591.00px;top:958.22px;font-size:8.8px;transform:scaleX(0.9393);transform-origin:0 0;color:#16191f;-webkit-text-stroke:0.1px #16191f">Product B manual</div>
<div class="a " style="left:744.60px;top:958.58px;font-size:8.4px;color:#16191f">40</div>
<div class="a " style="left:893.00px;top:958.58px;font-size:8.4px;color:#16191f">20</div>
<div class="a" style="left:552.50px;top:972.92px;width:487.50px;height:1.00px;background:#eceef0"></div>
<div class="a" style="left:294.60px;top:91.20px;width:71.80px;height:49.50px;background:#fff;border:1px solid #b9c0c7;border-radius:5px;box-shadow:0 1px 3px rgba(0,7,22,.15)"></div>
<div class="a " style="left:302.70px;top:95.11px;font-size:8.5px;letter-spacing:-0.460px;color:#16191f">Channel</div>
<div class="a" style="left:295.60px;top:108.00px;width:69.80px;height:1.00px;background:#dde1e4"></div>
<div class="a " style="left:302.70px;top:111.11px;font-size:8.5px;letter-spacing:-0.580px;color:#16191f">Queue</div>
<div class="a" style="left:295.60px;top:123.90px;width:69.80px;height:1.00px;background:#dde1e4"></div>
<div class="a " style="left:302.70px;top:127.21px;font-size:8.5px;letter-spacing:-0.058px;color:#16191f">Routing profile</div>
<div class="a" style="left:206.70px;top:316.00px;width:57.60px;height:74.40px;background:#fff;border:1px solid #b9c0c7;border-radius:5px;box-shadow:0 1px 3px rgba(0,7,22,.15)"></div>
<div class="a " style="left:214.00px;top:319.81px;font-size:8.5px;letter-spacing:-0.394px;color:#16191f">Channel</div>
<div class="a" style="left:207.70px;top:331.90px;width:55.60px;height:1.00px;background:#dde1e4"></div>
<div class="a " style="left:214.00px;top:335.81px;font-size:8.5px;letter-spacing:-0.430px;color:#16191f">Queue</div>
<div class="a" style="left:207.70px;top:348.10px;width:55.60px;height:1.00px;background:#dde1e4"></div>
<div class="a " style="left:214.00px;top:351.61px;font-size:8.5px;letter-spacing:-0.199px;color:#16191f">Routing</div>
<div class="a " style="left:214.00px;top:363.31px;font-size:8.5px;letter-spacing:0.042px;color:#16191f">profile</div>
<div class="a" style="left:207.70px;top:376.00px;width:55.60px;height:1.00px;background:#dde1e4"></div>
<div class="a " style="left:214.00px;top:379.31px;font-size:8.5px;letter-spacing:-0.511px;color:#16191f">AI use case</div>
</body></html>
